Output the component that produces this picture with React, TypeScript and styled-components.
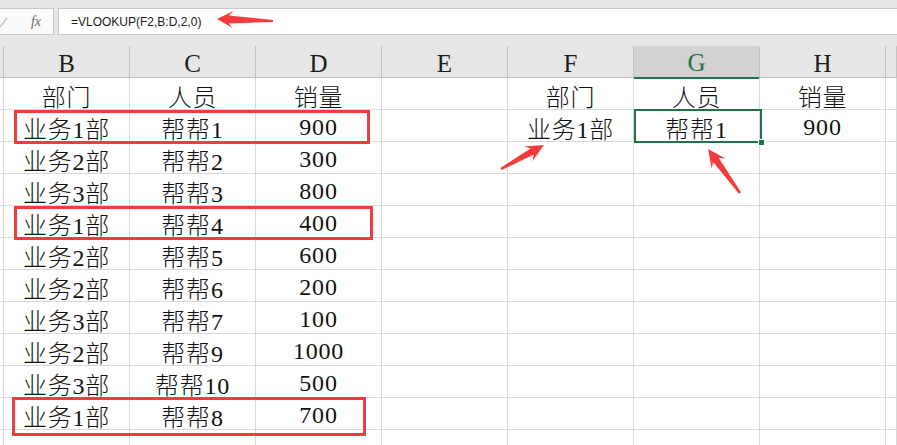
import React from 'react';
import styled, { createGlobalStyle } from 'styled-components';

const GlobalStyle = createGlobalStyle`
  html, body {
    margin: 0;
    padding: 0;
    background: #ffffff;
  }
  * {
    box-sizing: border-box;
  }
`;

const COLS = '4px repeat(7, 126px) 1fr';

const Page = styled.div`
  position: relative;
  width: 897px;
  height: 445px;
  overflow: hidden;
  background: #ffffff;
  font-family: 'Liberation Serif', 'Noto Sans CJK SC', serif;
`;

const FormulaArea = styled.div`
  display: flex;
  gap: 4px;
  height: 46px;
  padding-top: 8px;
  background: #e6e6e6;
`;

const FxBox = styled.div`
  display: flex;
  align-items: center;
  justify-content: space-between;
  width: 54px;
  height: 27px;
  padding-right: 12px;
  background: #fafafa;
  border-top: 1px solid #c8c8c8;
  border-bottom: 1px solid #c8c8c8;
  border-right: 1px solid #c8c8c8;
`;

const FxLabel = styled.span`
  font-family: 'Liberation Serif', serif;
  font-style: italic;
  font-size: 14px;
  color: #6a6a6a;
`;

const FormulaInput = styled.div`
  flex: 1;
  display: flex;
  align-items: center;
  height: 27px;
  padding-left: 12px;
  background: #ffffff;
  border: 1px solid #c8c8c8;
  border-right: none;
  font-family: 'Liberation Sans', 'Noto Sans', sans-serif;
  font-size: 12px;
  color: #1a1a1a;
`;

const HeaderRow = styled.div`
  display: grid;
  grid-template-columns: ${COLS};
  height: 32px;
  background: #e6e6e6;
  border-bottom: 1px solid #bdbdbd;
`;

const HeaderCell = styled.div<{ $active?: boolean }>`
  display: flex;
  align-items: center;
  justify-content: center;
  padding-top: 3px;
  border-right: 1px solid #c3c3c3;
  font-size: 25px;
  color: ${(p) => (p.$active ? '#217346' : '#1c1c1c')};
  background: ${(p) => (p.$active ? '#d2d2d2' : 'transparent')};
  border-bottom: ${(p) => (p.$active ? '2px solid #217346' : 'none')};
`;

const Grid = styled.div`
  display: grid;
  grid-template-columns: ${COLS};
  grid-auto-rows: 32px;
`;

const Cell = styled.div`
  display: flex;
  align-items: center;
  justify-content: center;
  padding-top: 3px;
  border-right: 1px solid #d9d9d9;
  border-bottom: 1px solid #d9d9d9;
  font-size: 24px;
  font-weight: 300;
  letter-spacing: 0.8px;
  color: #111111;
  white-space: nowrap;
`;

const RedBox = styled.div<{ $x: number; $y: number; $w: number; $h: number }>`
  position: absolute;
  left: ${(p) => p.$x}px;
  top: ${(p) => p.$y}px;
  width: ${(p) => p.$w}px;
  height: ${(p) => p.$h}px;
  border: 3px solid #f03c3c;
  pointer-events: none;
`;

const Selection = styled.div`
  position: absolute;
  left: 634px;
  top: 109px;
  width: 128px;
  height: 34px;
  border: 2px solid #217346;
  pointer-events: none;
`;

const FillHandle = styled.div`
  position: absolute;
  right: -5px;
  bottom: -5px;
  width: 7px;
  height: 7px;
  background: #217346;
  border: 1px solid #ffffff;
`;

const Overlay = styled.svg`
  position: absolute;
  left: 0;
  top: 0;
  pointer-events: none;
`;

type Pt = [number, number];

function arrowPoints(tail: Pt, tip: Pt, head = 16, wing = 8, neck = 3.5, end = 1): string {
  const dx = tip[0] - tail[0];
  const dy = tip[1] - tail[1];
  const len = Math.hypot(dx, dy);
  const ux = dx / len;
  const uy = dy / len;
  const nx = -uy;
  const ny = ux;
  const bx = tip[0] - ux * head;
  const by = tip[1] - uy * head;
  const kx = tip[0] - ux * head * 0.75;
  const ky = tip[1] - uy * head * 0.75;
  const pts: Pt[] = [
    tip,
    [bx + nx * wing, by + ny * wing],
    [kx + nx * neck, ky + ny * neck],
    [tail[0] + nx * end, tail[1] + ny * end],
    [tail[0] - nx * end, tail[1] - ny * end],
    [kx - nx * neck, ky - ny * neck],
    [bx - nx * wing, by - ny * wing],
  ];
  return pts.map((p) => `${p[0].toFixed(1)},${p[1].toFixed(1)}`).join(' ');
}

const headers = ['', 'B', 'C', 'D', 'E', 'F', 'G', 'H', ''];

const rows: string[][] = [
  ['部门', '人员', '销量', '', '部门', '人员', '销量'],
  ['业务1部', '帮帮1', '900', '', '业务1部', '帮帮1', '900'],
  ['业务2部', '帮帮2', '300'],
  ['业务3部', '帮帮3', '800'],
  ['业务1部', '帮帮4', '400'],
  ['业务2部', '帮帮5', '600'],
  ['业务2部', '帮帮6', '200'],
  ['业务3部', '帮帮7', '100'],
  ['业务2部', '帮帮9', '1000'],
  ['业务3部', '帮帮10', '500'],
  ['业务1部', '帮帮8', '700'],
  [],
];

export default function App() {
  return (
    <Page>
      <GlobalStyle />
      <FormulaArea>
        <FxBox>
          <svg width="10" height="27" viewBox="0 0 10 27">
            <line x1="0" y1="19" x2="7" y2="10" stroke="#c4c4c4" strokeWidth="1.6" />
          </svg>
          <FxLabel>fx</FxLabel>
        </FxBox>
        <FormulaInput>=VLOOKUP(F2,B:D,2,0)</FormulaInput>
      </FormulaArea>

      <HeaderRow>
        {headers.map((h, i) => (
          <HeaderCell key={i} $active={h === 'G'}>
            {h}
          </HeaderCell>
        ))}
      </HeaderRow>

      <Grid>
        {rows.map((r, ri) =>
          Array.from({ length: 9 }).map((_, ci) => (
            <Cell key={`${ri}-${ci}`}>{ci === 0 || ci === 8 ? '' : r[ci - 1] ?? ''}</Cell>
          )),
        )}
      </Grid>

      <RedBox $x={14} $y={110} $w={356} $h={34} />
      <RedBox $x={14} $y={206} $w={359} $h={34} />
      <RedBox $x={12} $y={397} $w={354} $h={39} />

      <Selection>
        <FillHandle />
      </Selection>

      <Overlay width="897" height="445" viewBox="0 0 897 445">
        <polygon points={arrowPoints([273, 21], [217, 19], 16, 8.5, 4, 1)} fill="#f53b3b" />
        <polygon points={arrowPoints([501, 169], [544, 145], 18, 8.5, 3.5, 1.2)} fill="#f53b3b" />
        <polygon points={arrowPoints([740, 193], [708, 149], 18, 8.5, 3.5, 1.2)} fill="#f53b3b" />
      </Overlay>
    </Page>
  );
}
